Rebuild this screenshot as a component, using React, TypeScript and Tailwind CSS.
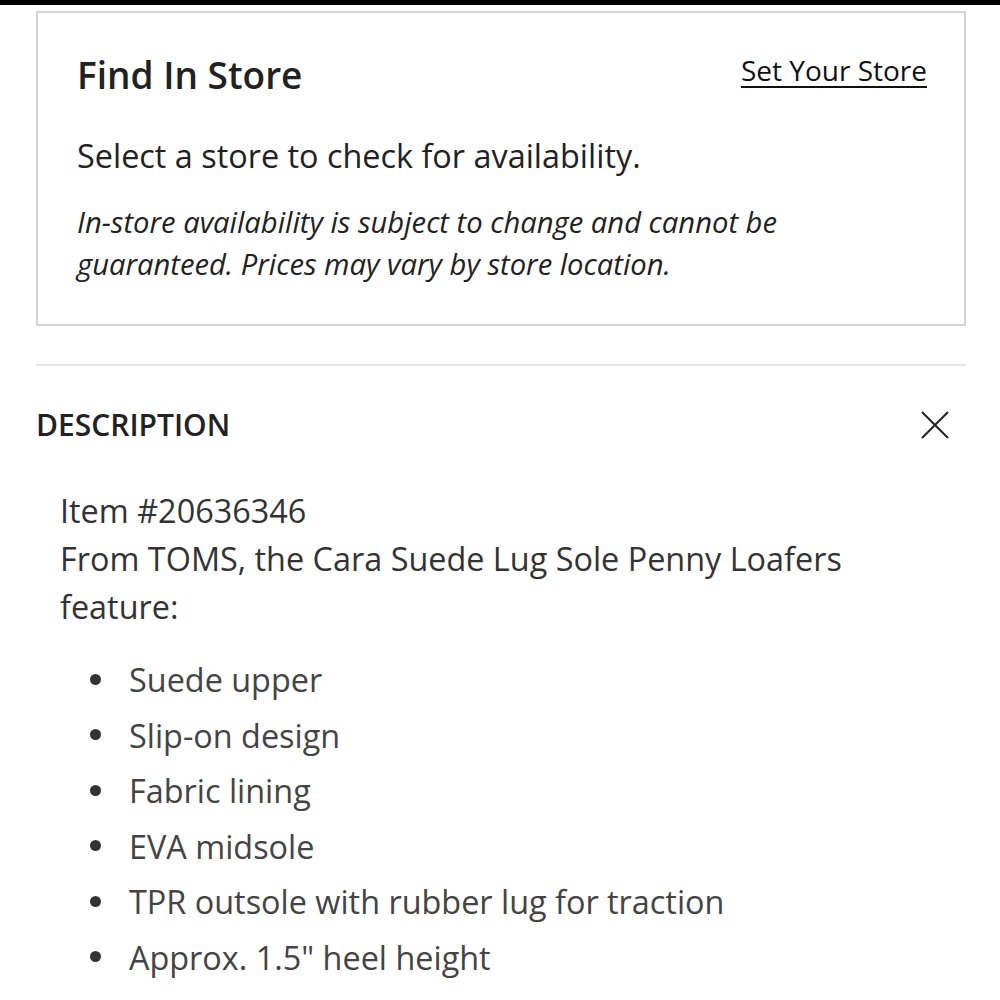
import React from "react";

const features = [
  "Suede upper",
  "Slip-on design",
  "Fabric lining",
  "EVA midsole",
  "TPR outsole with rubber lug for traction",
  'Approx. 1.5" heel height',
];

const App: React.FC = () => (
  <div className="min-h-[1000px] w-[1000px] overflow-hidden bg-white font-['Open_Sans',sans-serif] text-[#222]">
    <div className="h-[5px] bg-black" />

    {/* Find in store */}
    <div className="ml-[36px] mr-[34px] mt-[6px] h-[315px] border-2 border-[#d4d4d4] pl-[39px] pr-[37px] pt-[34px]">
      <div className="flex items-start justify-between">
        <h2 className="text-[37px] leading-[56px] font-semibold">Find In Store</h2>
        <a className="mt-[3px] text-[28px] leading-[40px] text-[#111] underline decoration-2 underline-offset-[5px]">
          Set Your Store
        </a>
      </div>
      <p className="mt-[32px] text-[32.4px] leading-[40px]">Select a store to check for availability.</p>
      <p className="mt-[26px] text-[29.2px] leading-[42px] italic">
        In-store availability is subject to change and cannot be
        <br />
        guaranteed. Prices may vary by store location.
      </p>
    </div>

    <div className="ml-[36px] mr-[34px] mt-[38px] h-[2px] bg-[#e6e6e6]" />

    {/* Description */}
    <div className="ml-[36px] mr-[34px] mt-[36px] flex items-center justify-between">
      <h3 className="text-[30px] leading-[46px] font-semibold">DESCRIPTION</h3>
      <svg width="30" height="30" viewBox="0 0 30 30" className="mr-[16px]">
        <path d="M2 2 L28 28 M28 2 L2 28" stroke="#222" strokeWidth="2" fill="none" />
      </svg>
    </div>

    <div className="mt-[38px] pl-[60px] text-[32.4px] leading-[48px] text-[#333]">
      <p>Item #20636346</p>
      <p>From TOMS, the Cara Suede Lug Sole Penny Loafers</p>
      <p>feature:</p>
      <ul className="mt-[27px] flex flex-col gap-[11.6px] text-[#444]">
        {features.map((f) => (
          <li key={f} className="flex items-center leading-[44px]">
            <span className="ml-[30px] mr-[28px] h-[11px] w-[11px] rounded-full bg-[#333]" />
            {f}
          </li>
        ))}
      </ul>
    </div>
  </div>
);

export default App;
